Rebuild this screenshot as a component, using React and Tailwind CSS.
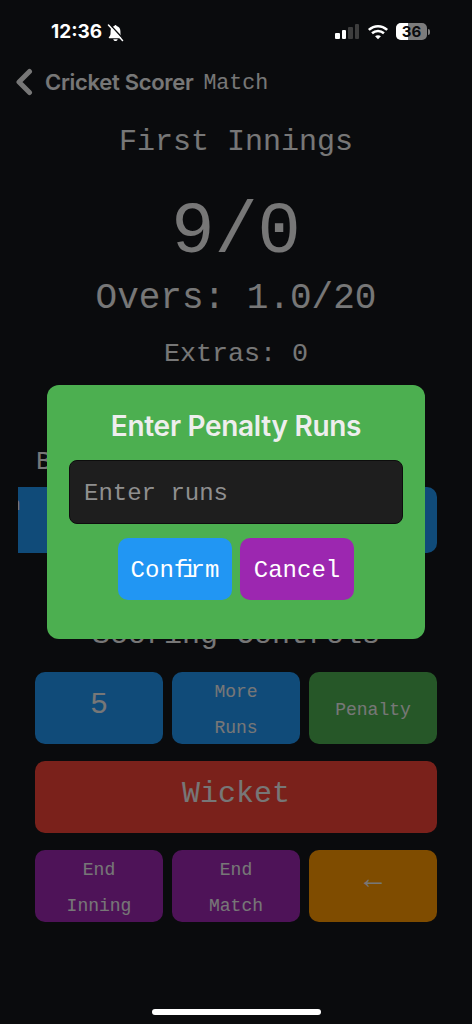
const mono = "font-['Liberation_Mono',monospace]"
const inter = "font-['Inter',sans-serif]"

function ScoreButton({ bg, className = 'text-[18px] leading-[36px] pt-[3px]', children }) {
  return (
    <div className={`h-[72px] rounded-[10px] flex items-center justify-center text-center text-[#eeeeee] ${bg} ${className}`}>
      <div>{children}</div>
    </div>
  )
}

function StatusBar() {
  return (
    <div className="relative z-20 h-[64px] flex items-start justify-between pl-[51px] pr-[42px] pt-[20px]">
      <div className="flex items-center gap-[5px]">
        <span className={`${inter} text-white text-[19px] leading-[24px] font-bold`}>12:36</span>
        <svg width="17" height="18" viewBox="0 0 17 18" fill="white" className="mt-[1px]">
          <path d="M8.500 1C8 1 7.500 1.400 7.400 2C5 2.600 3.600 4.600 3.600 7L3.500 10C3.400 11.500 2.300 12.500 1.800 13.300C1.500 13.800 1.800 14.200 2.300 14.200H14.700C15.200 14.200 15.500 13.800 15.200 13.300C14.700 12.500 13.600 11.500 13.500 10L13.400 7C13.400 4.600 12 2.600 9.600 2C9.500 1.400 9 1 8.500 1Z" />
          <path d="M6.300 15.200H10.700C10.500 16.300 9.600 17 8.500 17C7.400 17 6.500 16.300 6.300 15.200Z" />
          <path d="M2.800 0.500L16.800 15.500" stroke="#0a0b0d" strokeWidth="1.500" />
          <path d="M1.500 1L15.500 16.500" stroke="white" strokeWidth="1.500" strokeLinecap="round" />
        </svg>
      </div>
      <div className="flex items-center pt-[3px]">
        <div className="flex items-end gap-[2px] h-[17px] pb-[1px]">
          <div className="w-[4.500px] h-[6px] rounded-[1px] bg-white" />
          <div className="w-[4.500px] h-[9px] rounded-[1px] bg-white" />
          <div className="w-[4.500px] h-[12px] rounded-[1px] bg-[#3d3d3d]" />
          <div className="w-[4.500px] h-[15px] rounded-[1px] bg-[#3d3d3d]" />
        </div>
        <svg width="22" height="16" viewBox="0 0 24 17" fill="none" stroke="white" strokeWidth="2.800" className="ml-[8px]">
          <path d="M2 6.200C8 .8 16 .8 22 6.200" />
          <path d="M5.500 9.800C9.300 6.500 14.700 6.500 18.500 9.800" />
          <path d="M12 16.500 8.800 13.200C10.600 11.800 13.400 11.800 15.200 13.200Z" fill="white" stroke="none" />
        </svg>
        <div className="flex items-center ml-[7px]">
          <div className="relative w-[31px] h-[17px] rounded-[5px] flex bg-[#7c7c7c]">
            <div className="w-[12px] bg-white rounded-l-[5px]" />
            <span className={`${inter} absolute inset-0 flex items-center justify-center text-[15px] leading-[17px] font-bold text-[#0a0b0d]`}>36</span>
          </div>
          <div className="w-[2px] h-[6px] rounded-r-[2px] bg-[#7c7c7c] ml-[1px]" />
        </div>
      </div>
    </div>
  )
}

export default function App() {
  return (
    <div className={`relative w-full h-screen overflow-hidden bg-[#14161a] ${mono}`}>
      <StatusBar />

      {/* Page behind the dialog */}
      <div className="flex items-center h-[36px] pl-[15px]">
        <svg width="18" height="28" viewBox="0 0 18 28" fill="none" stroke="#eeeeee" strokeWidth="5" strokeLinecap="round" strokeLinejoin="round">
          <path d="M14.500 3.500 4 14 14.500 24.500" />
        </svg>
        <span className={`${inter} ml-[12px] text-[#eeeeee] text-[22px] font-semibold tracking-[-0.3px]`}>Cricket Scorer</span>
        <span className="ml-[10px] pt-[3px] text-[#eeeeee] text-[21.600px]">Match</span>
      </div>

      <div className="text-center text-[#eeeeee] text-[30px] leading-[40px] mt-[22px]">First Innings</div>
      <div className="text-center text-[#eeeeee] text-[72px] leading-[90px] mt-[26px]">9/0</div>
      <div className="text-center text-[#eeeeee] text-[36px] leading-[40px] mt-[1px]">Overs: 1.0/20</div>
      <div className="text-center text-[#eeeeee] text-[26.700px] leading-[32px] mt-[19px]">Extras: 0</div>

      <div className="text-[#eeeeee] text-[26px] leading-[32px] pl-[36px] mt-[76px]">Batsman</div>
      <div className="ml-[18px] mr-[35px] mt-[9px] flex justify-between overflow-hidden">
        <div className="w-[233px] h-[66px] -ml-[73px] bg-[#2196f3] rounded-[10px] text-[#eeeeee] text-[18px] leading-[36px]">Batsman</div>
        <div className="w-[160px] h-[66px] bg-[#2196f3] rounded-[10px]" />
      </div>

      <div className="text-center text-[#eeeeee] text-[30px] leading-[40px] mt-[62px]">Scoring Controls</div>

      <div className="mx-[35px] mt-[17px] flex flex-col gap-[17px]">
        <div className="grid grid-cols-3 gap-[9px]">
          <ScoreButton bg="bg-[#2196f3]" className="text-[30px] pb-[5px]">5</ScoreButton>
          <ScoreButton bg="bg-[#2196f3]">More<br />Runs</ScoreButton>
          <ScoreButton bg="bg-[#4caf50]">Penalty</ScoreButton>
        </div>
        <ScoreButton bg="bg-[#f44336]" className="text-[30px] pb-[5px]">Wicket</ScoreButton>
        <div className="grid grid-cols-3 gap-[9px]">
          <ScoreButton bg="bg-[#9c27b0]">End<br />Inning</ScoreButton>
          <ScoreButton bg="bg-[#9c27b0]">End<br />Match</ScoreButton>
          <ScoreButton bg="bg-[#ff9800]" className="text-[30px] pb-[12px]">←</ScoreButton>
        </div>
      </div>

      {/* Dim layer and dialog */}
      <div className="absolute inset-0 z-10 bg-black/50">
        <div className="absolute left-[47px] top-[385px] w-[378px] h-[254px] rounded-[12px] bg-[#4caf50] flex flex-col items-center px-[22px] pt-[23px]">
          <div className={`${inter} text-[#eeeeee] text-[28px] leading-[36px] font-semibold tracking-[-0.3px]`}>Enter Penalty Runs</div>
          <div className="w-full h-[64px] mt-[16px] rounded-[8px] bg-[#1e1e1e] border border-[#0d0d0d] flex items-center pl-[14px] pt-[3px] text-[#8f8f8f] text-[24px]">
            Enter runs
          </div>
          <div className="flex gap-[8px] mt-[14px]">
            <div className="w-[114px] h-[62px] rounded-[10px] bg-[#2196f3] flex items-center justify-center pt-[3px] text-white text-[24px]">
              <span>Con<span className="tracking-[-6px]">fi</span>rm</span>
            </div>
            <div className="w-[114px] h-[62px] rounded-[10px] bg-[#9c27b0] flex items-center justify-center pt-[3px] text-white text-[24px]">Cancel</div>
          </div>
        </div>
      </div>

      <div className="absolute z-20 left-[152px] bottom-[9px] w-[169px] h-[6px] rounded-full bg-white" />
    </div>
  )
}
